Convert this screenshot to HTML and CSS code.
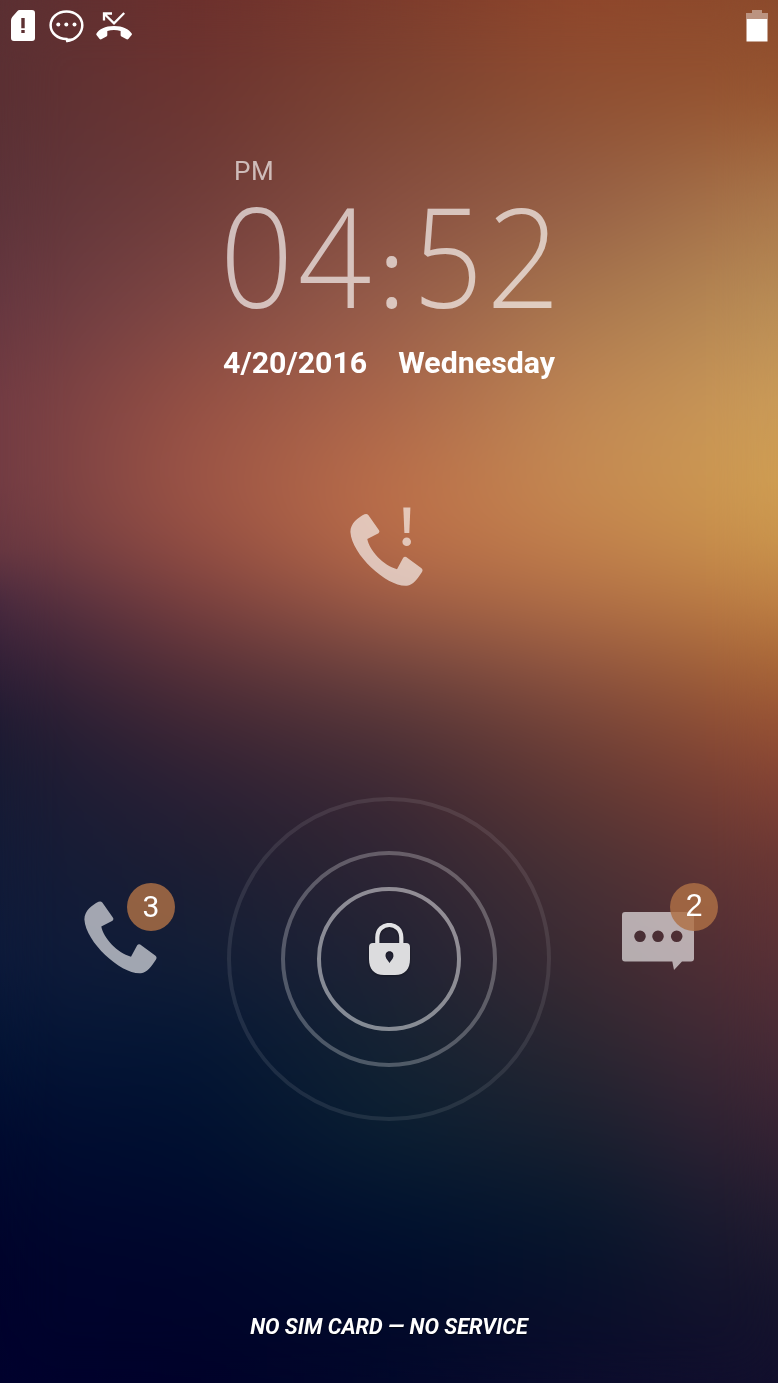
FILE: index.html
```html
<!DOCTYPE html>
<html lang="en">
<head>
<meta charset="utf-8">
<title>Lock screen</title>
<link rel="stylesheet" href="styles.css">
</head>
<body>
<svg width="0" height="0" class="defs">
  <symbol id="handset" viewBox="0 0 74 74">
    <path d="M14.5 .8Q16.8-.3 18.3 1.5L29 16.8Q30 18.5 28.5 19.7L17.3 25.600C19.5 37 33 52 47 55.8L53.2 44.3Q54.4 42.6 56.2 43.5L71.5 54.8Q73.3 56.4 72 58.5C67.5 65.5 63 71.5 57 72.3C38 74 2 42 .4 18.5C.2 10 8 4.2 14.5 .8Z"/>
  </symbol>
</svg>
<main class="screen">
  <div class="wall wall-1"></div>
  <div class="wall wall-2"></div>
  <div class="wall wall-3"></div>
  <div class="wall wall-4"></div>
  <div class="wall wall-5"></div>
  <div class="wall wall-soften"></div>

  <header class="status">
    <div class="status-left">
      <svg width="24" height="31" viewBox="0 0 24 31" fill="#fff"><path fill-rule="evenodd" d="M8.5 0H21Q24 0 24 3V28Q24 31 21 31H3Q0 31 0 28V10.5Q0 8.500 1.200 7L6.500 1Q7.300 0 8.500 0ZM10.300 8V18.200H13.700V8ZM10.300 20V23H13.700V20Z"/></svg>
      <svg class="chat" width="35" height="34" viewBox="0 0 35 34"><path d="M17.500 1.500C8.500 1.500 1.600 7.500 1.600 15.200S8.500 29 17.500 29L18.300 31C26 30 33.300 23.500 33.300 15.200C33.300 7.500 26.500 1.500 17.500 1.500Z" fill="none" stroke="#fff" stroke-width="2.500"/><path d="M17 28.500H26Q22 31.500 17.500 32.200Z" fill="#fff"/><g fill="#fff"><circle cx="9.300" cy="14.500" r="2"/><circle cx="17.300" cy="14.500" r="2"/><circle cx="25.500" cy="14.500" r="2"/></g></svg>
      <svg class="missed" width="36" height="28" viewBox="0 0 36 28"><path d="M8 8.500V1.500H16M8.500 2L18 11.300L28.200 1" fill="none" stroke="#fff" stroke-width="2.300"/><path d="M.5 21.500C3 17.500 9 14.100 18 14.100S33 17.500 35.700 21.500Q36.200 22.300 35.600 23L32.300 27Q31.500 27.700 30.600 27.300L25.500 24.500Q24.600 24 24.600 23V19Q18 17 11.300 19V23Q11.300 24 10.400 24.500L5.300 27.300Q4.400 27.700 3.600 27L.5 23Q0 22.300 .5 21.500Z" fill="#fff"/></svg>
    </div>
    <svg width="22" height="32" viewBox="0 0 22 32" fill="#fff"><path fill-opacity=".4" d="M6 0H16V3H22V9H0V3H6Z"/><path d="M.5 9H21.500V31.500H.5Z"/></svg>
  </header>

  <section class="clock">
    <div class="meridiem">PM</div>
    <div class="time"><span>0</span><span>4</span><span class="colon">:</span><span class="five">5</span><span class="last">2</span></div>
    <div class="date"><span>4/20/2016</span><span>Wednesday</span></div>
  </section>

  <div class="alert">
    <svg width="74" height="80" viewBox="0 0 74 80" fill="#fff"><use href="#handset" y="6.500" width="74" height="74"/><path d="M53.300 .5H60.400L59.300 26H54.400Z"/><circle cx="56.700" cy="34.700" r="4.300"/></svg>
  </div>

  <section class="unlock">
    <div class="shortcut calls">
      <svg class="icon" width="74" height="74"><use href="#handset"/></svg>
      <span class="badge">3</span>
    </div>
    <div class="ring outer"><div class="ring middle"><div class="ring inner">
      <svg class="lock" width="41" height="52" viewBox="0 0 41 52"><path d="M8.300 22V14.500C8.300 -2.200 32.300 -2.200 32.300 14.500V22" fill="none" stroke="#e3e3e5" stroke-width="4.200"/><path fill="#dcdcde" fill-rule="evenodd" d="M4 20H37Q41 20 41 24V36C41 46 36 52 26 52H15C5 52 0 46 0 36V24Q0 20 4 20ZM20.500 28.300C17.500 28.300 16.300 30.700 16.600 33.500C17 36 19 37.500 20.500 40C22 37.500 24 36 24.400 33.500C24.700 30.700 23.500 28.300 20.500 28.300Z"/></svg>
    </div></div></div>
    <div class="shortcut messages">
      <svg class="icon message" width="72" height="58" viewBox="0 0 72 58"><path fill-rule="evenodd" d="M3 0H69Q72 0 72 3V46.500Q72 49.500 69 49.500H60L52 58L50.300 49.500H3Q0 49.500 0 46.500V3Q0 0 3 0ZM12.200 24.300a5.800 5.800 0 1 0 11.600 0a5.800 5.800 0 1 0-11.600 0ZM30.200 24.300a5.800 5.800 0 1 0 11.600 0a5.800 5.800 0 1 0-11.600 0ZM48.900 24.300a5.800 5.800 0 1 0 11.600 0a5.800 5.800 0 1 0-11.600 0Z"/></svg>
      <span class="badge two">2</span>
    </div>
  </section>

  <footer class="carrier">NO SIM CARD — NO SERVICE</footer>
</main>
</body>
</html>
```

FILE: styles.css
```css
* { box-sizing: border-box; }
body { margin: 0; font-family: Roboto, sans-serif; color: #fff; }
.defs { position: absolute; }
svg { display: block; }

.screen {
  position: relative;
  isolation: isolate;
  width: 778px;
  height: 1383px;
  overflow: hidden;
  display: flex;
  flex-direction: column;
  align-items: center;
}

/* Wallpaper: vertical gradients cross-faded from left to right */
.wall { position: absolute; inset: 0; z-index: -1; }
.wall-1 { background: linear-gradient(#5b3033 0, #5a3034 100px, #5c333a 200px, #653740 300px, #713b43 400px, #713b43 480px, #673741 550px, #47293f 600px, #322038 660px, #1f1b33 720px, #171b34 780px, #121b38 860px, #0d1a3b 960px, #051536 1040px, #010b30 1140px, #00042c 1260px, #00022e 1383px); }
.wall-2 { background: linear-gradient(#6c302d 0, #6c3531 100px, #703d3a 200px, #7f4743 300px, #955044 400px, #9d5546 480px, #954f43 540px, #7a403f 600px, #5a3239 660px, #402735 720px, #2b2034 790px, #1c1e33 870px, #121e37 960px, #051735 1040px, #001030 1140px, #00062c 1260px, #00022a 1383px); -webkit-mask-image: linear-gradient(to right, transparent 0, #000 25%); mask-image: linear-gradient(to right, transparent 0, #000 25%); }
.wall-3 { background: linear-gradient(#7c3b2c 0, #7d4533 100px, #874f41 200px, #965d4a 300px, #ab674b 400px, #ba6f4a 480px, #ba6d49 540px, #a05d46 600px, #774740 660px, #553538 720px, #3b2834 800px, #2c2534 880px, #212335 960px, #152333 1040px, #0b2032 1120px, #01122f 1220px, #000a2a 1300px, #03082b 1383px); -webkit-mask-image: linear-gradient(to right, transparent 25%, #000 50%); mask-image: linear-gradient(to right, transparent 25%, #000 50%); }
.wall-4 { background: linear-gradient(#8f462b 0, #8f5033 100px, #966046 200px, #a9774e 300px, #bf8754 400px, #c68b52 480px, #c2814c 540px, #b27046 600px, #955840 660px, #784539 720px, #613834 790px, #493135 870px, #3c2b33 960px, #2c2732 1040px, #1c2130 1120px, #08182d 1220px, #080f2a 1300px, #0c0c2d 1383px); -webkit-mask-image: linear-gradient(to right, transparent 50%, #000 75%); mask-image: linear-gradient(to right, transparent 50%, #000 75%); }
.wall-5 { background: linear-gradient(#8b4a2c 0, #985731 100px, #aa774a 200px, #b98d56 300px, #ca9b58 400px, #cf9e52 480px, #ca954c 540px, #bf8144 600px, #ab6938 660px, #995334 720px, #864434 780px, #6c3734 860px, #5a3036 960px, #4a2b36 1040px, #3a2434 1120px, #241c30 1220px, #17152d 1300px, #120f2d 1383px); -webkit-mask-image: linear-gradient(to right, transparent 75%, #000 100%); mask-image: linear-gradient(to right, transparent 75%, #000 100%); }
.wall-soften { -webkit-backdrop-filter: blur(30px); backdrop-filter: blur(30px); }

.status { width: 100%; height: 54px; padding: 10px 10px 0 11px; display: flex; justify-content: space-between; }
.status-left { display: flex; }
.chat { margin-left: 14px; }
.missed { margin: 2px 0 0 12px; }

.clock { width: 332px; margin-top: 103px; }
.meridiem { padding-left: 11px; height: 30px; font-size: 26px; line-height: 29px; letter-spacing: .5px; opacity: .65; }
.time {
  display: flex;
  align-items: baseline;
  width: 348px;
  height: 143px;
  margin: -4px 0 0 -5px;
  font: 300 139px/143px "Open Sans", "Noto Sans", sans-serif;
  opacity: .65;
}
.time span { width: 77.5px; display: grid; justify-content: center; transform: scaleX(.93); }
.time .colon { width: 37.5px; font-size: 93px; font-weight: 400; line-height: 100px; transform: none; }
.time .five { width: 74px; transform: scaleX(.88); }
.time .last { width: 77px; }
.date { display: flex; justify-content: space-between; margin-top: 19px; font-size: 30.3px; line-height: 36px; font-weight: 700; white-space: nowrap; }

.alert { height: 80px; margin: 126px 4px 0 0; opacity: .62; }

.unlock { width: 100%; margin-top: 210px; padding-left: 84px; display: flex; align-items: center; }
.ring { display: grid; place-items: center; border-radius: 50%; border: 4px solid; }
.outer { width: 324px; height: 324px; border-color: rgba(255,255,255,.09); }
.middle { width: 216px; height: 216px; border-color: rgba(255,255,255,.26); }
.inner { width: 144px; height: 144px; border-color: rgba(255,255,255,.48); }
.lock { margin-bottom: 20px; filter: drop-shadow(0 1px 1px rgba(0,0,0,.35)); }
.shortcut { position: relative; height: 92px; margin-bottom: 60px; display: flex; align-items: flex-end; }
.calls { width: 91px; margin-right: 52px; }
.messages { width: 96px; margin-left: 71px; }
.icon { fill: rgba(255,255,255,.61); }
.message { margin-bottom: 5px; }
.badge {
  position: absolute;
  top: 0;
  right: 0;
  width: 48px;
  height: 48px;
  border-radius: 50%;
  background: rgba(174,112,70,.82);
  text-align: center;
  font: 400 30px/47px Roboto, sans-serif;
}
.two { font: 400 31px/46px "Liberation Sans", sans-serif; }

.carrier { margin-top: 192px; font-size: 21.7px; line-height: 28px; font-weight: 700; font-style: italic; white-space: nowrap; text-shadow: 0 1px 1px rgba(0,0,0,.6); }
```
